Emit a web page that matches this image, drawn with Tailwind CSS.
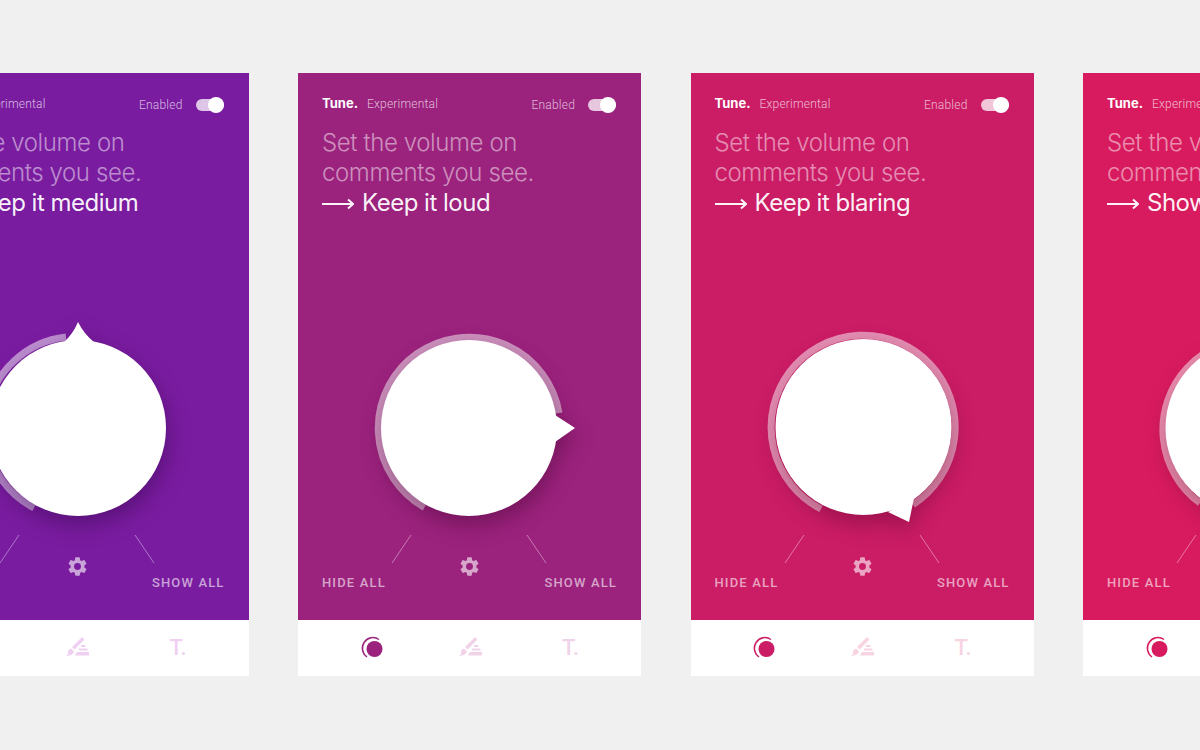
<!DOCTYPE html>
<html lang="en">
<head>
  <meta charset="UTF-8" />
  <title>Tune. Experimental</title>
  <script src="https://cdn.jsdelivr.net/npm/@tailwindcss/browser@4"></script>
</head>
<body class="w-[1200px] h-[750px] overflow-hidden bg-[#f0f0f0] font-['Roboto',sans-serif]">
  <div class="flex gap-[49.5px] ml-[-94.5px] pt-[73px] w-[1600px]">

    <!-- Medium -->
    <section class="w-[343px] shrink-0">
      <div class="h-[547px] bg-[#7a1ca0] px-6 flex flex-col">
        <div class="flex items-center h-[18px] mt-[22px]">
          <span class="font-['Inter'] font-bold text-[13px] text-white">Tune.</span>
          <span class="ml-[9px] text-[12px] font-light tracking-[0.2px] text-white/70">Experimental</span>
          <span class="ml-auto mt-[2px] text-[12px] font-light tracking-[0.2px] text-white/70">Enabled</span>
          <span class="ml-[13px] mr-[1px] mt-[2px] w-7 h-[12px] rounded-full bg-white/75 relative"><span class="absolute right-0 top-[-2px] w-4 h-4 rounded-full bg-white"></span></span>
        </div>
        <h2 class="mt-[15px] text-[24px] leading-[30px] font-light text-white/50 whitespace-nowrap font-['Inter'] tracking-[-0.4px]">Set the volume on<br>comments you see.<br><span class="flex items-center h-[30px] font-normal text-white/95 tracking-[-0.5px]"><svg class="w-8 h-3 mr-2 mt-[2px]" viewBox="0 0 32 12" fill="none" stroke="currentColor" stroke-width="2"><path d="M0 6h31M26 1.500l5 4.500-5 4.500"/></svg>Keep it medium</span></h2>
        <svg class="mt-[102px] ml-[-24px] shrink-0 overflow-visible" width="343" height="245" viewBox="0 0 343 245" fill="none">
          <path d="M128 188A91 91 0 0 1 160 17" stroke="#fff" stroke-opacity=".5" stroke-width="7"/>
          <g class="drop-shadow-[2px_9px_11px_rgba(40,0,60,0.4)]" fill="#fff"><circle cx="172" cy="108" r="88"/><path d="M158 22Q167 14 172 2Q178 14 188 22Z"/></g>
          <path d="M113 215L94 243M229 215L248 243" stroke="#fff" stroke-opacity=".4"/>
        </svg>
        <div class="relative flex justify-between items-center text-[13px] font-medium tracking-[1.15px] text-white/60 mt-[8px]">
          <span>HIDE ALL</span><span>SHOW ALL</span>
          <svg class="absolute left-[136px] top-[-18px] w-[23px] h-[23px]" viewBox="0 0 24 24" fill="currentColor"><path d="M19.14 12.94c.04-.3.06-.61.06-.94s-.02-.64-.07-.94l2.03-1.58a.49.49 0 0 0 .12-.61l-1.92-3.32a.49.49 0 0 0-.59-.22l-2.39.96a7 7 0 0 0-1.62-.94l-.36-2.54a.48.48 0 0 0-.48-.41h-3.84a.48.48 0 0 0-.47.41l-.36 2.54c-.59.24-1.13.57-1.62.94l-2.39-.96a.49.49 0 0 0-.59.22L2.74 8.87a.48.48 0 0 0 .12.61l2.03 1.58c-.05.3-.09.63-.09.94s.02.64.07.94l-2.03 1.58a.49.49 0 0 0-.12.61l1.92 3.32c.12.22.37.29.59.22l2.39-.96c.5.38 1.03.7 1.62.94l.36 2.54c.05.24.24.41.48.41h3.84c.24 0 .44-.17.47-.41l.36-2.54c.59-.24 1.13-.56 1.62-.94l2.39.96c.22.08.47 0 .59-.22l1.92-3.32a.48.48 0 0 0-.12-.61zM12 15.600A3.600 3.600 0 1 1 12 8.400a3.600 3.600 0 0 1 0 7.200z"/></svg>
        </div>
      </div>
      <div class="h-[56px] bg-white grid grid-cols-3 px-[23px] items-center justify-items-center text-[#efd0f2]">
        <svg class="w-6 h-6" viewBox="0 0 24 24" fill="none"><circle cx="15.500" cy="13" r="8" fill="#7a1ca0"/><path d="M8 21A10.500 10.500 0 0 1 20 3.500" stroke="#7a1ca0" stroke-width="1.500"/></svg>
        <svg class="w-6 h-6" viewBox="0 0 24 24" fill="currentColor"><path d="M17 1l2.500 2.500-10 10-2.500-2.500zM6 12.500l3 3q-1 4-8 4.500q3-2 2-5q1-2 3-2.500z"/><path d="M16 9h4l1 2h-5zM14 12.500h8l1 2h-9zM12 16h12v3.500H10z"/></svg>
        <span class="font-medium text-[22px] ml-[4px] mt-[-2px]">T.</span>
      </div>
    </section>

    <!-- Loud -->
    <section class="w-[343px] shrink-0">
      <div class="h-[547px] bg-[#9b227d] px-6 flex flex-col">
        <div class="flex items-center h-[18px] mt-[22px]">
          <span class="font-['Inter'] font-bold text-[13px] text-white">Tune.</span>
          <span class="ml-[9px] text-[12px] font-light tracking-[0.2px] text-white/70">Experimental</span>
          <span class="ml-auto mt-[2px] text-[12px] font-light tracking-[0.2px] text-white/70">Enabled</span>
          <span class="ml-[13px] mr-[1px] mt-[2px] w-7 h-[12px] rounded-full bg-white/75 relative"><span class="absolute right-0 top-[-2px] w-4 h-4 rounded-full bg-white"></span></span>
        </div>
        <h2 class="mt-[15px] text-[24px] leading-[30px] font-light text-white/50 whitespace-nowrap font-['Inter'] tracking-[-0.4px]">Set the volume on<br>comments you see.<br><span class="flex items-center h-[30px] font-normal text-white/95 tracking-[-0.5px]"><svg class="w-8 h-3 mr-2 mt-[2px]" viewBox="0 0 32 12" fill="none" stroke="currentColor" stroke-width="2"><path d="M0 6h31M26 1.500l5 4.500-5 4.500"/></svg>Keep it loud</span></h2>
        <svg class="mt-[102px] ml-[-24px] shrink-0 overflow-visible" width="343" height="245" viewBox="0 0 343 245" fill="none">
          <path d="M126.500 187.400A91 91 0 1 1 261 93" stroke="#fff" stroke-opacity=".5" stroke-width="7"/>
          <g class="drop-shadow-[2px_9px_11px_rgba(60,0,40,0.4)]" fill="#fff"><circle cx="171" cy="108" r="88"/><path d="M257 95L277 108L257 122Z"/></g>
          <path d="M113 215L94 243M229 215L248 243" stroke="#fff" stroke-opacity=".4"/>
        </svg>
        <div class="relative flex justify-between items-center text-[13px] font-medium tracking-[1.15px] text-white/60 mt-[8px]">
          <span>HIDE ALL</span><span>SHOW ALL</span>
          <svg class="absolute left-[136px] top-[-18px] w-[23px] h-[23px]" viewBox="0 0 24 24" fill="currentColor"><path d="M19.14 12.94c.04-.3.06-.61.06-.94s-.02-.64-.07-.94l2.03-1.58a.49.49 0 0 0 .12-.61l-1.92-3.32a.49.49 0 0 0-.59-.22l-2.39.96a7 7 0 0 0-1.62-.94l-.36-2.54a.48.48 0 0 0-.48-.41h-3.84a.48.48 0 0 0-.47.41l-.36 2.54c-.59.24-1.13.57-1.62.94l-2.39-.96a.49.49 0 0 0-.59.22L2.74 8.87a.48.48 0 0 0 .12.61l2.03 1.58c-.05.3-.09.63-.09.94s.02.64.07.94l-2.03 1.58a.49.49 0 0 0-.12.61l1.92 3.32c.12.22.37.29.59.22l2.39-.96c.5.38 1.03.7 1.62.94l.36 2.54c.05.24.24.41.48.41h3.84c.24 0 .44-.17.47-.41l.36-2.54c.59-.24 1.13-.56 1.62-.94l2.39.96c.22.08.47 0 .59-.22l1.92-3.32a.48.48 0 0 0-.12-.61zM12 15.600A3.600 3.600 0 1 1 12 8.400a3.600 3.600 0 0 1 0 7.200z"/></svg>
        </div>
      </div>
      <div class="h-[56px] bg-white grid grid-cols-3 px-[23px] items-center justify-items-center text-[#f0d3e8]">
        <svg class="w-6 h-6" viewBox="0 0 24 24" fill="none"><circle cx="15.500" cy="13" r="8" fill="#9b227d"/><path d="M8 21A10.500 10.500 0 0 1 20 3.500" stroke="#9b227d" stroke-width="1.500"/></svg>
        <svg class="w-6 h-6" viewBox="0 0 24 24" fill="currentColor"><path d="M17 1l2.500 2.500-10 10-2.500-2.500zM6 12.500l3 3q-1 4-8 4.500q3-2 2-5q1-2 3-2.500z"/><path d="M16 9h4l1 2h-5zM14 12.500h8l1 2h-9zM12 16h12v3.500H10z"/></svg>
        <span class="font-medium text-[22px] ml-[4px] mt-[-2px]">T.</span>
      </div>
    </section>

    <!-- Blaring -->
    <section class="w-[343px] shrink-0">
      <div class="h-[547px] bg-[#cb1c66] px-6 flex flex-col">
        <div class="flex items-center h-[18px] mt-[22px]">
          <span class="font-['Inter'] font-bold text-[13px] text-white">Tune.</span>
          <span class="ml-[9px] text-[12px] font-light tracking-[0.2px] text-white/70">Experimental</span>
          <span class="ml-auto mt-[2px] text-[12px] font-light tracking-[0.2px] text-white/70">Enabled</span>
          <span class="ml-[13px] mr-[1px] mt-[2px] w-7 h-[12px] rounded-full bg-white/75 relative"><span class="absolute right-0 top-[-2px] w-4 h-4 rounded-full bg-white"></span></span>
        </div>
        <h2 class="mt-[15px] text-[24px] leading-[30px] font-light text-white/50 whitespace-nowrap font-['Inter'] tracking-[-0.4px]">Set the volume on<br>comments you see.<br><span class="flex items-center h-[30px] font-normal text-white/95 tracking-[-0.5px]"><svg class="w-8 h-3 mr-2 mt-[2px]" viewBox="0 0 32 12" fill="none" stroke="currentColor" stroke-width="2"><path d="M0 6h31M26 1.500l5 4.500-5 4.500"/></svg>Keep it blaring</span></h2>
        <svg class="mt-[102px] ml-[-24px] shrink-0 overflow-visible" width="343" height="245" viewBox="0 0 343 245" fill="none">
          <path d="M130 189A92 92 0 1 1 222 184.500" stroke="#fff" stroke-opacity=".5" stroke-width="7"/>
          <g class="drop-shadow-[2px_9px_11px_rgba(70,0,30,0.35)]" fill="#fff"><circle cx="172.500" cy="107" r="88"/><path d="M197 192L218 202L223 178Z"/></g>
          <path d="M113 215L94 243M229 215L248 243" stroke="#fff" stroke-opacity=".4"/>
        </svg>
        <div class="relative flex justify-between items-center text-[13px] font-medium tracking-[1.15px] text-white/60 mt-[8px]">
          <span>HIDE ALL</span><span>SHOW ALL</span>
          <svg class="absolute left-[136px] top-[-18px] w-[23px] h-[23px]" viewBox="0 0 24 24" fill="currentColor"><path d="M19.14 12.94c.04-.3.06-.61.06-.94s-.02-.64-.07-.94l2.03-1.58a.49.49 0 0 0 .12-.61l-1.92-3.32a.49.49 0 0 0-.59-.22l-2.39.96a7 7 0 0 0-1.62-.94l-.36-2.54a.48.48 0 0 0-.48-.41h-3.84a.48.48 0 0 0-.47.41l-.36 2.54c-.59.24-1.13.57-1.62.94l-2.39-.96a.49.49 0 0 0-.59.22L2.74 8.87a.48.48 0 0 0 .12.61l2.03 1.58c-.05.3-.09.63-.09.94s.02.64.07.94l-2.03 1.58a.49.49 0 0 0-.12.61l1.92 3.32c.12.22.37.29.59.22l2.39-.96c.5.38 1.03.7 1.62.94l.36 2.54c.05.24.24.41.48.41h3.84c.24 0 .44-.17.47-.41l.36-2.54c.59-.24 1.13-.56 1.62-.94l2.39.96c.22.08.47 0 .59-.22l1.92-3.32a.48.48 0 0 0-.12-.61zM12 15.600A3.600 3.600 0 1 1 12 8.400a3.600 3.600 0 0 1 0 7.200z"/></svg>
        </div>
      </div>
      <div class="h-[56px] bg-white grid grid-cols-3 px-[23px] items-center justify-items-center text-[#f8d3e2]">
        <svg class="w-6 h-6" viewBox="0 0 24 24" fill="none"><circle cx="15.500" cy="13" r="8" fill="#cb1c66"/><path d="M8 21A10.500 10.500 0 0 1 20 3.500" stroke="#cb1c66" stroke-width="1.500"/></svg>
        <svg class="w-6 h-6" viewBox="0 0 24 24" fill="currentColor"><path d="M17 1l2.500 2.500-10 10-2.500-2.500zM6 12.500l3 3q-1 4-8 4.500q3-2 2-5q1-2 3-2.500z"/><path d="M16 9h4l1 2h-5zM14 12.500h8l1 2h-9zM12 16h12v3.500H10z"/></svg>
        <span class="font-medium text-[22px] ml-[4px] mt-[-2px]">T.</span>
      </div>
    </section>

    <!-- Show all -->
    <section class="w-[343px] shrink-0">
      <div class="h-[547px] bg-[#d81b5e] px-6 flex flex-col">
        <div class="flex items-center h-[18px] mt-[22px]">
          <span class="font-['Inter'] font-bold text-[13px] text-white">Tune.</span>
          <span class="ml-[9px] text-[12px] font-light tracking-[0.2px] text-white/70">Experimental</span>
        </div>
        <h2 class="mt-[15px] text-[24px] leading-[30px] font-light text-white/50 whitespace-nowrap font-['Inter'] tracking-[-0.4px]">Set the volume on<br>comments you see.<br><span class="flex items-center h-[30px] font-normal text-white/95 tracking-[-0.5px]"><svg class="w-8 h-3 mr-2 mt-[2px]" viewBox="0 0 32 12" fill="none" stroke="currentColor" stroke-width="2"><path d="M0 6h31M26 1.500l5 4.500-5 4.500"/></svg>Show all</span></h2>
        <svg class="mt-[102px] ml-[-24px] shrink-0 overflow-visible" width="343" height="245" viewBox="0 0 343 245" fill="none">
          <path d="M117 183A91 91 0 1 1 222 185" stroke="#fff" stroke-opacity=".5" stroke-width="7"/>
          <g class="drop-shadow-[2px_9px_11px_rgba(70,0,30,0.35)]" fill="#fff"><circle cx="170.500" cy="108" r="88"/></g>
          <path d="M113 215L94 243M229 215L248 243" stroke="#fff" stroke-opacity=".4"/>
        </svg>
        <div class="relative flex justify-between items-center text-[13px] font-medium tracking-[1.15px] text-white/60 mt-[8px]">
          <span>HIDE ALL</span><span>SHOW ALL</span>
        </div>
      </div>
      <div class="h-[56px] bg-white grid grid-cols-3 px-[23px] items-center justify-items-center">
        <svg class="w-6 h-6" viewBox="0 0 24 24" fill="none"><circle cx="15.500" cy="13" r="8" fill="#d81b5e"/><path d="M8 21A10.500 10.500 0 0 1 20 3.500" stroke="#d81b5e" stroke-width="1.500"/></svg>
        <span></span><span></span>
      </div>
    </section>

  </div>
</body>
</html>
